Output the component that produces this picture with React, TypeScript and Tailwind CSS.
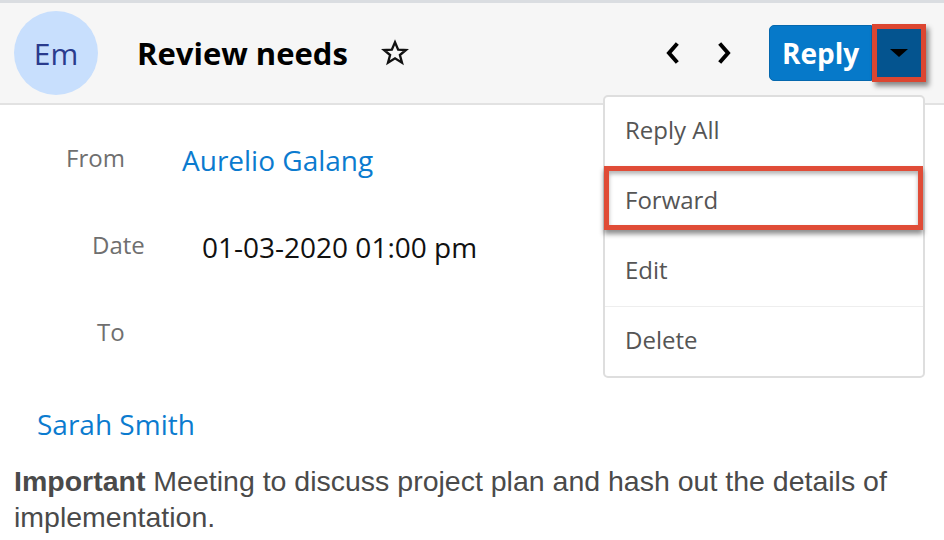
import React from "react";

export default function App() {
  return (
    <div className="relative w-[944px] h-[540px] overflow-hidden bg-white font-['Open_Sans',sans-serif]">
      <header className="flex h-[105px] items-center border-t-[3px] border-b-2 border-t-[#dadde1] border-b-[#e2e2e2] bg-[#f6f6f6] pl-[14px]">
        <div className="flex h-[84px] w-[84px] items-center justify-center rounded-full bg-[#c8dffd] text-[30px] text-[#2a3b8d]">
          Em
        </div>
        <h1 className="ml-[39px] text-[31px] font-bold leading-none text-black">
          Review needs
        </h1>
        <svg className="ml-[33px]" width="28" height="28" viewBox="0 0 24 24" fill="none" stroke="#111" strokeWidth="2" strokeLinejoin="miter">
          <polygon points="12,2.8 14.7,9.1 21.4,9.4 16.2,13.7 18,20.3 12,16.6 6,20.3 7.8,13.7 2.6,9.4 9.3,9.1" />
        </svg>
        <div className="flex-1" />
        <div className="flex items-center gap-[37px]">
          <svg width="16" height="22" viewBox="0 0 16 22" fill="none" stroke="#000" strokeWidth="4" strokeLinecap="square">
            <polyline points="12,3 5,11 12,19" />
          </svg>
          <svg width="16" height="22" viewBox="0 0 16 22" fill="none" stroke="#000" strokeWidth="4" strokeLinecap="square">
            <polyline points="4,3 11,11 4,19" />
          </svg>
        </div>
        <div className="ml-[36px] mr-[18px] flex items-center">
          <button className="flex h-[56px] w-[103px] items-center justify-center rounded-l-[5px] border border-[#0568ae] bg-[#0679c9] text-[28px] font-bold text-white">
            Reply
          </button>
          <div className="flex h-[58px] w-[54px] items-center justify-center border-[5px] border-[#dc4631] bg-[#04548f] shadow-[3px_4px_5px_rgba(0,0,0,0.45)]">
            <div className="h-0 w-0 border-l-[9px] border-r-[9px] border-t-[8px] border-l-transparent border-r-transparent border-t-black" />
          </div>
        </div>
      </header>

      <main className="pt-[11px]">
        <div className="flex h-[87px] items-center">
          <span className="mb-[4px] ml-[66px] w-[116px] text-[24px] text-[#6f6f6f]">From</span>
          <span className="text-[28px] text-[#0b7bcf]">Aurelio Galang</span>
        </div>
        <div className="flex h-[87px] items-center">
          <span className="mb-[4px] ml-[92px] w-[110px] text-[24px] text-[#6f6f6f]">Date</span>
          <span className="text-[28px] text-[#111]">01-03-2020 01:00 pm</span>
        </div>
        <div className="flex h-[87px] items-center">
          <span className="mb-[4px] ml-[97px] text-[24px] text-[#6f6f6f]">To</span>
        </div>
        <div className="flex h-[86px] items-center pl-[37px] pt-[8px]">
          <span className="text-[28px] text-[#0b7bcf]">Sarah Smith</span>
        </div>
        <p className="px-[14px] font-['Liberation_Sans',Arial,sans-serif] text-[28.5px] leading-[36px] text-[#4a4a4a]">
          <b className="font-bold">Important</b> Meeting to discuss project plan and hash out the details of implementation.
        </p>
      </main>

      <div className="absolute left-[603px] top-[95px] w-[322px] rounded-[5px] border-2 border-[#dedede] bg-white">
        <div className="flex h-[70px] items-center pb-[4px] pl-[20px] text-[24px] text-[#555]">Reply All</div>
        <div className="relative flex h-[70px] items-center pb-[4px] pl-[20px] text-[24px] text-[#555]">
          Forward
          <div className="absolute left-[-1px] right-[0px] top-[-1px] h-[64px] border-[5px] border-[#e04c37] shadow-[0_4px_5px_rgba(0,0,0,0.45),inset_0_3px_4px_rgba(0,0,0,0.3)]" />
        </div>
        <div className="flex h-[69px] items-center pb-[4px] pl-[20px] text-[24px] text-[#555]">Edit</div>
        <div className="h-px bg-[#eeeeee]" />
        <div className="flex h-[69px] items-center pb-[4px] pl-[20px] text-[24px] text-[#555]">Delete</div>
      </div>
    </div>
  );
}
